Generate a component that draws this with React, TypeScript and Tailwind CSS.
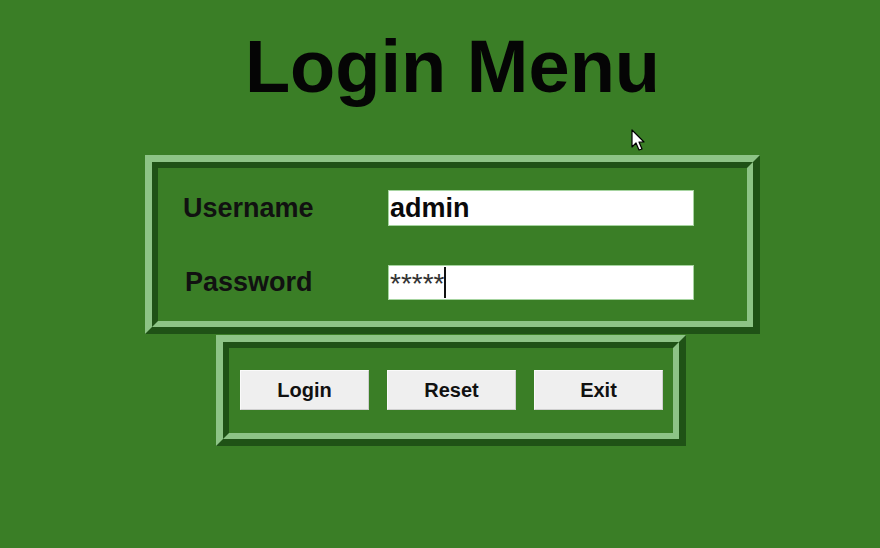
// Login Menu - ridge-framed login panel

const font = { fontFamily: '"Liberation Sans", Arial, sans-serif' };

function Ridge({ className, children }: { className?: string; children: React.ReactNode }) {
  // outer half: light top/left, dark bottom/right; inner half reversed
  return (
    <div
      className={`border-[7px] border-t-[#8dc486] border-l-[#8dc486] border-b-[#1f5216] border-r-[#1f5216] ${className ?? ''}`}
    >
      <div className="border-[6px] border-t-[#1f5216] border-l-[#1f5216] border-b-[#8dc486] border-r-[#8dc486]">
        {children}
      </div>
    </div>
  );
}

function Button({ label }: { label: string }) {
  return (
    <button className="w-[129px] h-[40px] bg-[#efefef] border border-t-[#fafafa] border-l-[#fafafa] border-b-[#cfcfcf] border-r-[#cfcfcf] text-[20px] font-bold text-[#111]">
      {label}
    </button>
  );
}

function Pointer() {
  return (
    <svg
      className="absolute left-[631px] top-[129px]"
      width="16"
      height="24"
      viewBox="0 0 16 24"
    >
      <path
        d="M1 1 L1 18 L5 14 L8 21 L11 20 L8 13 L13 13 Z"
        fill="#fff"
        stroke="#000"
        strokeWidth="1.2"
        strokeLinejoin="round"
      />
    </svg>
  );
}

export default function App() {
  return (
    <div className="relative w-[880px] h-[548px] bg-[#3a7e26] overflow-hidden" style={font}>
      <div className="w-[615px] ml-[145px] pt-[30px]">
        {/* Title */}
        <h1 className="text-center text-[74px] leading-[74px] font-bold text-[#050505]">
          Login Menu
        </h1>

        {/* Credentials frame */}
        <Ridge className="mt-[51px]">
          <div className="grid grid-cols-[205px_306px] gap-y-[39px] pl-[25px] pt-[22px] pb-[21px]">
            <div className="h-[36px] flex items-center text-[27px] font-bold text-[#111]">
              Username
            </div>
            <div className="h-[36px] bg-white border border-[#a6d4a0] flex items-center pl-[1px] text-[27px] font-bold text-[#0a0a0a]">
              admin
            </div>
            <div className="h-[35px] flex items-center pl-[2px] text-[27px] font-bold text-[#111]">
              Password
            </div>
            <div className="h-[35px] bg-white border border-[#a6d4a0] flex items-start pl-[1px] text-[28px] leading-[30px] text-[#333]">
              <span className="pt-[3px]">*****</span>
              <span className="w-[2px] h-[31px] mt-[1px] bg-[#111]" />
            </div>
          </div>
        </Ridge>

        {/* Actions frame */}
        <Ridge className="mt-[1px] ml-[71px] w-[470px]">
          <div className="flex gap-[18px] pl-[11px] pt-[22px] pb-[23px]">
            <Button label="Login" />
            <Button label="Reset" />
            <Button label="Exit" />
          </div>
        </Ridge>
      </div>

      <Pointer />
    </div>
  );
}
